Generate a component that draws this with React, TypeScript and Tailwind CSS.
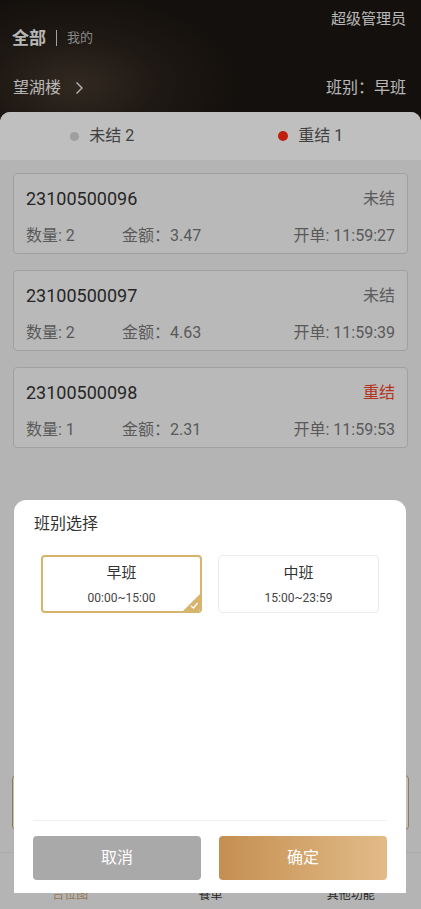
import React from 'react';

const FONT = { fontFamily: 'Roboto, "Noto Sans CJK SC", sans-serif' };

interface Order {
  no: string;
  status: '未结' | '重结';
  qty: number;
  amount: string;
  time: string;
}

const orders: Order[] = [
  { no: '23100500096', status: '未结', qty: 2, amount: '3.47', time: '11:59:27' },
  { no: '23100500097', status: '未结', qty: 2, amount: '4.63', time: '11:59:39' },
  { no: '23100500098', status: '重结', qty: 1, amount: '2.31', time: '11:59:53' },
];

const OrderCard: React.FC<{ order: Order }> = ({ order }) => (
  <div className="h-[81px] rounded-[4px] border border-[#d6d6d6] bg-[#f7f7f7] px-3 pt-[13px]">
    <div className="flex items-center justify-between">
      <span className="text-[18px] leading-[24px] text-[#333]">{order.no}</span>
      <span className={`text-[16px] leading-[24px] ${order.status === '重结' ? 'text-[#f0442a]' : 'text-[#7a7a7a]'}`}>
        {order.status}
      </span>
    </div>
    <div className="mt-[14px] flex items-center text-[16px] leading-[22px] text-[#777]">
      <span className="w-[96px]">数量: {order.qty}</span>
      <span className="flex-1">金额：{order.amount}</span>
      <span>开单: {order.time}</span>
    </div>
  </div>
);

export default function App() {
  return (
    <div style={FONT} className="relative flex h-[909px] w-[421px] flex-col overflow-hidden bg-[#f1f1f1]">
      {/* header */}
      <div className="h-[120px] shrink-0 bg-[radial-gradient(ellipse_160px_90px_at_18%_70%,#43372c_0%,#2a221b_50%,#1b1612_100%)] px-3 pt-[10px]">
        <div className="flex h-[56px] items-start justify-between">
          <div className="mt-[18px] flex items-center">
            <span className="text-[17px] font-bold leading-[20px] text-[#f4f4f4]">全部</span>
            <span className="mx-[10px] h-[16px] w-px bg-[#d8d8d8]" />
            <span className="text-[13px] leading-[20px] text-[#b5b5b5]">我的</span>
          </div>
          <span className="mr-[3px] text-[15px] leading-[18px] text-[#f4f4f4]">超级管理员</span>
        </div>
        <div className="mt-[11px] flex h-[22px] items-center justify-between pl-px">
          <div className="flex items-center">
            <span className="text-[16px] leading-[22px] text-[#f4f4f4]">望湖楼</span>
            <svg className="ml-[14px]" width="9" height="14" viewBox="0 0 9 14" fill="none">
              <path d="M1.5 1.5 L7 7 L1.5 12.5" stroke="#f4f4f4" strokeWidth="1.4" />
            </svg>
          </div>
          <span className="mr-[3px] text-[16px] leading-[22px] text-[#f4f4f4]">班别：早班</span>
        </div>
      </div>

      {/* panel */}
      <div className="-mt-2 flex flex-1 flex-col rounded-t-[10px] bg-[#f1f1f1]">
        <div className="flex h-[48px] shrink-0 rounded-t-[10px] bg-white">
          <div className="flex flex-1 items-center justify-center gap-[10px] pr-[4px]">
            <span className="h-[9px] w-[9px] rounded-full bg-[#d4d4d4]" />
            <span className="text-[16px] text-[#555]">未结 2</span>
          </div>
          <div className="flex flex-1 items-center justify-center gap-[10px] pr-[8px]">
            <span className="h-[10px] w-[10px] rounded-full bg-[#ff2a10]" />
            <span className="text-[16px] text-[#555]">重结 1</span>
          </div>
        </div>

        <div className="flex flex-col gap-4 px-[13px] pt-[13px]">
          {orders.map((o) => (
            <OrderCard key={o.no} order={o} />
          ))}
        </div>

        <div className="flex-1" />

        <div className="mx-3 h-[55px] rounded-[4px] border border-[#c9a270] bg-white" />

        <div className="mt-[22px] grid h-[57px] grid-cols-3 items-end border-t border-[#e4e4e4] bg-[#f1f1f1] pb-[6px]">
          <span className="text-center text-[12px] leading-[16px] text-[#c9a270]">台位图</span>
          <span className="text-center text-[12px] leading-[16px] text-[#333]">餐单</span>
          <span className="text-center text-[12px] leading-[16px] text-[#333]">其他功能</span>
        </div>
      </div>

      {/* mask */}
      <div className="absolute inset-0 bg-black/25" />

      {/* shift picker */}
      <div className="absolute left-[14px] top-[500px] flex h-[393px] w-[392px] flex-col rounded-t-[12px] bg-white">
        <div className="pl-[20px] pt-[13px] text-[16px] leading-[22px] text-[#333]">班别选择</div>
        <div className="mt-[20px] grid grid-cols-2 gap-4 px-[27px]">
          <div className="relative flex h-[58px] flex-col items-center justify-center overflow-hidden rounded-[4px] border-2 border-[#d6b46c]">
            <span className="text-[15px] leading-[20px] text-[#333]">早班</span>
            <span className="mt-[7px] text-[12px] leading-[16px] text-[#444]">00:00~15:00</span>
            <svg className="absolute bottom-0 right-0" width="17" height="17" viewBox="0 0 17 17">
              <path d="M17 0 L17 17 L0 17 Z" fill="#d6b46c" />
              <path d="M8 12 L10.5 14 L14.5 9" stroke="#fff" strokeWidth="1.3" fill="none" />
            </svg>
          </div>
          <div className="flex h-[58px] flex-col items-center justify-center rounded-[4px] border border-[#ececec]">
            <span className="text-[15px] leading-[20px] text-[#333]">中班</span>
            <span className="mt-[7px] text-[12px] leading-[16px] text-[#444]">15:00~23:59</span>
          </div>
        </div>

        <div className="flex-1" />

        <div className="mx-[19px] h-px bg-[#f0f0f0]" />
        <div className="mt-[15px] flex gap-[18px] px-[19px] pb-[13px]">
          <button className="h-[44px] flex-1 rounded-[4px] bg-[#a9a9a9] text-[16px] text-white">取消</button>
          <button className="h-[44px] flex-1 rounded-[4px] bg-gradient-to-r from-[#c48f50] to-[#e2bb88] text-[16px] text-white">
            确定
          </button>
        </div>
      </div>
    </div>
  );
}
